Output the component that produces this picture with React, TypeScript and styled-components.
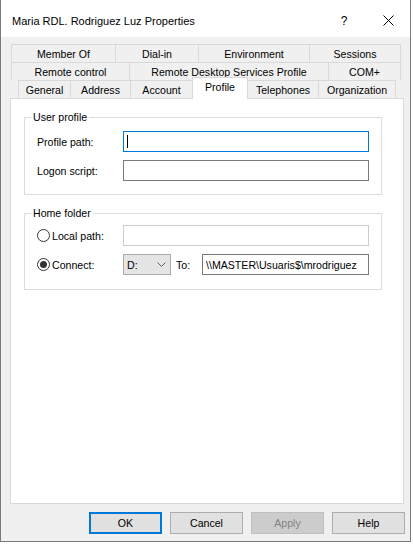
import React from "react";
import styled, { createGlobalStyle } from "styled-components";

const GlobalStyle = createGlobalStyle`
    html, body {
        margin: 0;
        padding: 0;
        background: #ffffff;
    }
    body {
        font-family: "Liberation Sans", Arial, sans-serif;
        font-size: 10.6px;
        color: #000000;
    }
`;

const Window = styled.div`
    width: 411px;
    box-sizing: border-box;
    border: 1px solid #7a7a7a;
    border-top: none;
    background: #f0f0f0;
    display: flex;
    flex-direction: column;
`;

const TitleBar = styled.div`
    height: 37px;
    box-sizing: border-box;
    padding: 4px 0 0 11px;
    background: #ffffff;
    display: flex;
    align-items: center;
`;

const Title = styled.div`
    flex: 1;
    font-size: 11px;
`;

const CaptionButton = styled.div`
    width: 44px;
    height: 100%;
    display: flex;
    align-items: center;
    justify-content: center;
    font-size: 12px;
`;

const Body = styled.div`
    padding: 7px 0 7px 9px;
    display: flex;
    flex-direction: column;
`;

const TabStrip = styled.div`
    width: 394px;
    display: flex;
    flex-direction: column;
`;

const TabRow = styled.div<{ $indent: number }>`
    height: 18px;
    display: flex;
    align-items: flex-start;
    padding-left: ${(p) => p.$indent}px;
`;

const Tab = styled.div<{ $w: number; $active?: boolean }>`
    box-sizing: border-box;
    width: ${(p) => p.$w}px;
    height: ${(p) => (p.$active ? 22 : 18)}px;
    margin-top: ${(p) => (p.$active ? -3 : 0)}px;
    margin-left: -1px;
    padding-bottom: ${(p) => (p.$active ? 3 : 0)}px;
    border: 1px solid #d9d9d9;
    border-bottom: none;
    background: ${(p) => (p.$active ? "#ffffff" : "#f0f0f0")};
    display: flex;
    align-items: center;
    justify-content: center;
    white-space: nowrap;
    position: ${(p) => (p.$active ? "relative" : "static")};
    z-index: ${(p) => (p.$active ? 1 : "auto")};

    &:first-child {
        margin-left: 0;
    }
`;

const Panel = styled.div`
    width: 394px;
    height: 406px;
    box-sizing: border-box;
    border: 1px solid #d9d9d9;
    background: #ffffff;
    padding-left: 13px;
    display: flex;
    flex-direction: column;
`;

const Group = styled.fieldset<{ $top: number; $padTop: number; $padBottom: number }>`
    margin: ${(p) => p.$top}px 0 0 0;
    width: 358px;
    box-sizing: border-box;
    min-width: 0;
    border: 1px solid #dcdcdc;
    padding: ${(p) => p.$padTop}px 12px ${(p) => p.$padBottom}px 12px;
    display: flex;
    flex-direction: column;
    gap: 8px;
`;

const Legend = styled.legend`
    padding: 0 2px;
    margin-left: -6px;
    line-height: 14px;
`;

const FieldRow = styled.div<{ $cols: string }>`
    height: 21px;
    display: grid;
    grid-template-columns: ${(p) => p.$cols};
    align-items: center;
`;

const RadioLabel = styled.div`
    display: flex;
    align-items: center;
    gap: 2px;
`;

const Radio = styled.span<{ $checked?: boolean }>`
    width: 13px;
    height: 13px;
    box-sizing: border-box;
    border-radius: 50%;
    border: 1px solid #333333;
    background: #ffffff;
    display: inline-flex;
    align-items: center;
    justify-content: center;

    &::after {
        content: "";
        width: 7px;
        height: 7px;
        border-radius: 50%;
        background: ${(p) => (p.$checked ? "#333333" : "transparent")};
    }
`;

const TextBox = styled.div<{ $state?: "focus" | "disabled" }>`
    height: 21px;
    box-sizing: border-box;
    border: 1px solid
        ${(p) => (p.$state === "focus" ? "#0078d7" : p.$state === "disabled" ? "#cccccc" : "#7a7a7a")};
    background: #ffffff;
    padding: 0 3px;
    display: flex;
    align-items: center;
    white-space: nowrap;
    overflow: hidden;
`;

const Caret = styled.span`
    width: 1px;
    height: 13px;
    background: #000000;
`;

const Combo = styled.div`
    height: 21px;
    box-sizing: border-box;
    border: 1px solid #acacac;
    background: #e5e5e5;
    padding: 0 4px 0 3px;
    display: flex;
    align-items: center;
    justify-content: space-between;
`;

const ToLabel = styled.span`
    padding-left: 5px;
`;

const ButtonRow = styled.div`
    margin-top: 8px;
    padding-right: 5px;
    display: flex;
    justify-content: flex-end;
    gap: 8px;
`;

const Button = styled.button<{ $default?: boolean }>`
    width: 73px;
    height: 22px;
    box-sizing: border-box;
    padding: 0;
    font: inherit;
    color: #000000;
    background: #e1e1e1;
    border: 1px solid ${(p) => (p.$default ? "#0078d7" : "#adadad")};
    box-shadow: ${(p) => (p.$default ? "inset 0 0 0 1px #0078d7" : "none")};

    &:disabled {
        background: #cccccc;
        border-color: #bfbfbf;
        color: #838383;
    }
`;

const tabRows: { indent: number; tabs: { label: string; w: number; active?: boolean }[] }[] = [
    {
        indent: 1,
        tabs: [
            { label: "Member Of", w: 105 },
            { label: "Dial-in", w: 84 },
            { label: "Environment", w: 112 },
            { label: "Sessions", w: 92 },
        ],
    },
    {
        indent: 1,
        tabs: [
            { label: "Remote control", w: 119 },
            { label: "Remote Desktop Services Profile", w: 200 },
            { label: "COM+", w: 73 },
        ],
    },
    {
        indent: 8,
        tabs: [
            { label: "General", w: 53 },
            { label: "Address", w: 61 },
            { label: "Account", w: 63 },
            { label: "Profile", w: 56, active: true },
            { label: "Telephones", w: 72 },
            { label: "Organization", w: 78 },
        ],
    },
];

const App = () => {
    return (
        <>
            <GlobalStyle />
            <Window>
                <TitleBar>
                    <Title>Maria RDL. Rodriguez Luz Properties</Title>
                    <CaptionButton>?</CaptionButton>
                    <CaptionButton>
                        <svg width="11" height="11" viewBox="0 0 11 11">
                            <path d="M0.5 0.5 L10.5 10.5 M10.5 0.5 L0.5 10.5" stroke="#000" strokeWidth="1" fill="none" />
                        </svg>
                    </CaptionButton>
                </TitleBar>
                <Body>
                    <TabStrip>
                        {tabRows.map((row, i) => (
                            <TabRow key={i} $indent={row.indent}>
                                {row.tabs.map((t) => (
                                    <Tab key={t.label} $w={t.w} $active={t.active}>
                                        {t.label}
                                    </Tab>
                                ))}
                            </TabRow>
                        ))}
                    </TabStrip>
                    <Panel>
                        <Group $top={11} $padTop={7} $padBottom={13}>
                            <Legend>User profile</Legend>
                            <FieldRow $cols="86px 1fr">
                                <span>Profile path:</span>
                                <TextBox $state="focus">
                                    <Caret />
                                </TextBox>
                            </FieldRow>
                            <FieldRow $cols="86px 1fr">
                                <span>Logon script:</span>
                                <TextBox />
                            </FieldRow>
                        </Group>
                        <Group $top={11} $padTop={5} $padBottom={14}>
                            <Legend>Home folder</Legend>
                            <FieldRow $cols="86px 1fr">
                                <RadioLabel>
                                    <Radio />
                                    <span>Local path:</span>
                                </RadioLabel>
                                <TextBox $state="disabled" />
                            </FieldRow>
                            <FieldRow $cols="86px 48px 31px 1fr">
                                <RadioLabel>
                                    <Radio $checked />
                                    <span>Connect:</span>
                                </RadioLabel>
                                <Combo>
                                    <span>D:</span>
                                    <svg width="9" height="5" viewBox="0 0 9 5">
                                        <path d="M0.5 0.5 L4.5 4.5 L8.5 0.5" stroke="#606060" strokeWidth="1" fill="none" />
                                    </svg>
                                </Combo>
                                <ToLabel>To:</ToLabel>
                                <TextBox>{"\\\\MASTER\\Usuaris$\\mrodriguez"}</TextBox>
                            </FieldRow>
                        </Group>
                    </Panel>
                    <ButtonRow>
                        <Button $default>OK</Button>
                        <Button>Cancel</Button>
                        <Button disabled>Apply</Button>
                        <Button>Help</Button>
                    </ButtonRow>
                </Body>
            </Window>
        </>
    );
};

export default App;
